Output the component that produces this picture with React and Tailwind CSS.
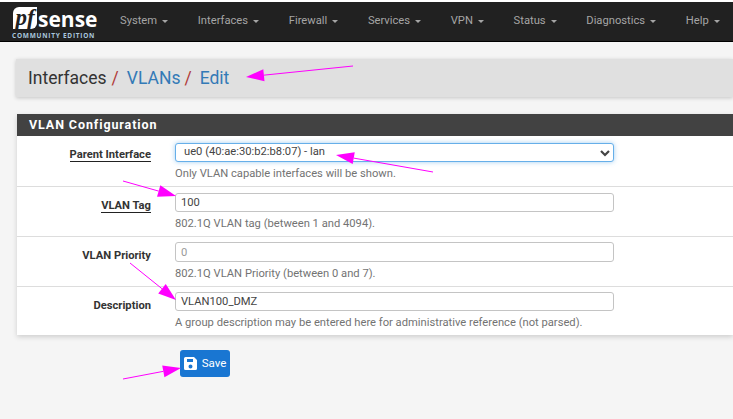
import React from "react";

const nav = ["System", "Interfaces", "Firewall", "Services", "VPN", "Status", "Diagnostics", "Help"];

function Arrow({ x1, y1, x2, y2, len = 18, half = 6 }) {
  const d = Math.hypot(x2 - x1, y2 - y1);
  const ux = (x2 - x1) / d;
  const uy = (y2 - y1) / d;
  const bx = x2 - ux * len;
  const by = y2 - uy * len;
  const pts = `${x2},${y2} ${bx - uy * half},${by + ux * half} ${bx + uy * half},${by - ux * half}`;
  return (
    <g>
      <line x1={x1} y1={y1} x2={bx} y2={by} stroke="#ff00ff" strokeWidth="1" />
      <polygon points={pts} fill="#ff00ff" />
    </g>
  );
}

function Row({ label, underline, help, children, border = true, h, fieldPt }) {
  return (
    <div className={`flex ${h} ${border ? "border-b border-[#dddddd]" : ""}`}>
      <div className="w-[134px] shrink-0 pt-[12px] text-right text-[11.2px] leading-[14px] font-bold text-[#333333]">
        <span className={underline ? "border-b border-[#222222]" : ""}>{label}</span>
      </div>
      <div className={`ml-[24px] w-[439px] shrink-0 ${fieldPt}`}>
        {children}
        <div className="mt-[5px] text-[11.2px] leading-[14px] text-[#737373] whitespace-nowrap">{help}</div>
      </div>
    </div>
  );
}

const inputCls =
  "w-full rounded-[3px] border border-[#c4c4c4] bg-white px-[5px] text-[11.2px] leading-[17px] flex items-center";

export default function App() {
  return (
    <div className="relative h-[419px] w-[733px] overflow-hidden bg-[#f5f5f5] font-['Roboto',sans-serif]">
      <div className="h-[2px] bg-white" />
      <nav className="flex h-[40px] items-center bg-[#212121] border-b border-black">
        <div className="ml-[12px] w-[108px] shrink-0 self-start pt-[5px]">
          <div className="flex h-[22px] items-end">
            <div className="ml-[1px] flex h-[22px] w-[24px] items-center justify-center rounded-tl-[6px] rounded-br-[6px] bg-white text-[23px] leading-[22px] font-bold italic text-[#212121] font-['Liberation_Serif',serif]">
              pf
            </div>
            <span className="ml-[1px] text-[21px] leading-[19px] font-bold text-white font-['Open_Sans',sans-serif]">sense</span>
          </div>
          <div className="mt-[3px] text-[6.5px] leading-[7px] font-bold tracking-[0.75px] text-[#a9c6dd] font-['Open_Sans',sans-serif] whitespace-nowrap">
            COMMUNITY EDITION
          </div>
        </div>
        <div className="flex items-center gap-[29.7px] text-[11.2px] text-[#a5a5a5] whitespace-nowrap">
          {nav.map((n) => (
            <div key={n} className="flex items-center">
              {n}
              <span className="ml-[5px] h-0 w-0 border-x-[3.5px] border-t-[3.5px] border-x-transparent border-t-[#a5a5a5]" />
            </div>
          ))}
        </div>
      </nav>
      <div className="ml-[16px] mt-[17px] flex h-[38px] items-center bg-[#e0e0e0] pl-[12px] text-[17.5px] text-[#333333] shadow-[0_1px_4px_rgba(0,0,0,0.2)] whitespace-nowrap">
        <span>Interfaces</span>
        <span className="ml-[5px] text-[#b03a3a]">/</span>
        <span className="ml-[8px] text-[#337ab7]">VLANs</span>
        <span className="ml-[4px] text-[#b03a3a]">/</span>
        <span className="ml-[8px] text-[#337ab7]">Edit</span>
      </div>
      <div className="ml-[17px] mt-[17px] bg-white shadow-[0_2px_5px_rgba(0,0,0,0.16)]">
        <div className="flex h-[22px] items-center bg-[#424242] pl-[12px] text-[12.5px] font-bold tracking-[0.9px] text-white">
          VLAN Configuration
        </div>
        <Row label="Parent Interface" underline h="h-[51px]" fieldPt="pt-[7px]" help="Only VLAN capable interfaces will be shown.">
          <div className="flex h-[19px] w-full items-center justify-between rounded-[3px] border border-[#66afe9] bg-white pl-[8px] pr-[2px] text-[11.2px] text-[#444444] shadow-[0_0_5px_rgba(102,175,233,0.6)]">
            <span>ue0 (40:ae:30:b2:b8:07) - lan</span>
            <svg width="12" height="10" viewBox="0 0 12 10" fill="none" stroke="#444444" strokeWidth="2.2">
              <path d="M2 3l4 4 4-4" />
            </svg>
          </div>
        </Row>
        <Row label="VLAN Tag" underline h="h-[50px]" fieldPt="pt-[6px]" help="802.1Q VLAN tag (between 1 and 4094).">
          <div className={`${inputCls} h-[19px] text-[#444444]`}>100</div>
        </Row>
        <Row label="VLAN Priority" h="h-[50px]" fieldPt="pt-[5px]" help="802.1Q VLAN Priority (between 0 and 7).">
          <div className={`${inputCls} h-[20px] text-[#999999]`}>0</div>
        </Row>
        <Row label="Description" border={false} h="h-[48px]" fieldPt="pt-[5px]" help="A group description may be entered here for administrative reference (not parsed).">
          <div className={`${inputCls} h-[19px] text-[#444444]`}>VLAN100_DMZ</div>
        </Row>
      </div>
      <button className="ml-[180px] mt-[15px] flex h-[27px] w-[50px] items-center justify-center gap-[5px] rounded-[3px] bg-[#1976d2] text-[11.5px] text-white">
        <svg width="13" height="13" viewBox="0 0 13 13">
          <path fill="#ffffff" fillRule="evenodd" d="M1.5 0H10l3 3v8.5a1.5 1.5 0 0 1-1.5 1.5h-10A1.5 1.5 0 0 1 0 11.5v-10A1.5 1.5 0 0 1 1.5 0zM3 2v3h6V2zm3.5 5.5a2 2 0 1 0 0 4 2 2 0 0 0 0-4z" />
        </svg>
        Save
      </button>
      <svg className="pointer-events-none absolute left-0 top-0" width="733" height="419">
        <Arrow x1={353} y1={66} x2={246} y2={77} />
        <Arrow x1={433} y1={172} x2={336} y2={155} />
        <Arrow x1={123} y1={181} x2={176} y2={196} />
        <Arrow x1={130} y1={263} x2={176} y2={300} />
        <Arrow x1={123} y1={379} x2={181} y2={368} />
      </svg>
    </div>
  );
}
